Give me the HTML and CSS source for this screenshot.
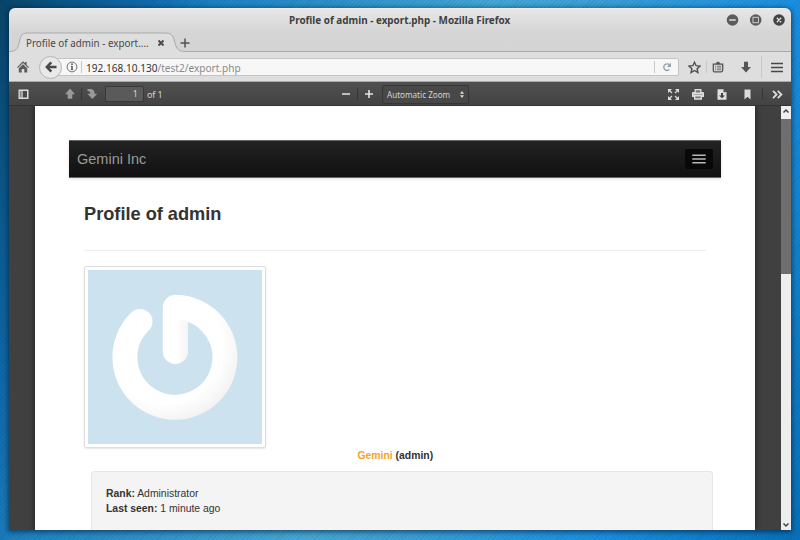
FILE: index.html
```html
<!DOCTYPE html>
<html lang="en">
<head>
<meta charset="utf-8">
<title>Profile of admin - export.php</title>
<link rel="stylesheet" href="styles.css">
</head>
<body>
<div class="window">
  <header class="chrome">
    <div class="titlebar">
      <span class="title"><span class="title-text">Profile of admin - export.php - Mozilla Firefox</span></span>
      <svg class="controls" width="60" height="14" viewBox="0 0 60 14">
        <g fill="#5c5c5c"><circle cx="6.5" cy="6" r="5.800"/><circle cx="29.7" cy="6" r="5.800"/><circle cx="53" cy="6" r="5.800" fill="#444"/></g>
        <g fill="none" stroke="#e0e0e0" stroke-width="1.300"><path d="M3.300 6h6.400M50.800 3.800l4.400 4.400M55.200 3.800l-4.400 4.400"/><rect x="27" y="3.300" width="5.400" height="5.400" stroke="#ccc" stroke-width="1"/></g>
      </svg>
    </div>
    <div class="tabs">
      <svg class="tab-shape" width="782" height="21" viewBox="0 0 782 21" preserveAspectRatio="none">
        <path d="M0 19.500C9 19.500 9 15 10.500 9C12 3 13 1 19 1H156C162 1 164 3 165.500 9C167 15 168 19.500 176 19.500H782V21H0Z" fill="#dedede"/>
        <path d="M0 19.500C9 19.500 9 15 10.500 9C12 3 13 1 19 1H156C162 1 164 3 165.500 9C167 15 168 19.500 176 19.500H782" fill="none" stroke="#a9a9a9"/>
      </svg>
      <span class="tab-text">Profile of admin - export....</span>
      <svg class="tab-close" width="8" height="8" viewBox="0 0 8 8"><path d="M1.500 1.500l5 5M6.500 1.500l-5 5" stroke="#4a4a4a" stroke-width="1.900"/></svg>
      <svg class="tab-add" width="10" height="10" viewBox="0 0 10 10"><path d="M5 .500v9M.500 5h9" stroke="#505050" stroke-width="1.500"/></svg>
    </div>
    <nav class="nav">
      <svg class="home" width="12" height="12" viewBox="0 0 12 12" fill="#5c5c5c"><path d="M6 .300L8 2.300V1h1.600v2.900L12 6.300l-.8.800L6 2.100.800 7.100 0 6.300Z"/><path d="M1.800 7.200L6 3.300l4.200 3.900V11.500H7.300V8H4.700v3.500H1.800Z"/></svg>
      <span class="back"><svg width="12" height="12" viewBox="0 0 12 12"><path d="M6.300 1.300L1.800 6l4.500 4.700M2 6h9.500" fill="none" stroke="#4a4a4a" stroke-width="2.500"/></svg></span>
      <div class="urlbar">
        <svg class="info" width="12" height="12" viewBox="0 0 12 12"><circle cx="6" cy="6" r="4.900" fill="none" stroke="#707070"/><path d="M6 5v4" fill="none" stroke="#555" stroke-width="1.500"/><path d="M5 5.300h1M4.800 8.700h2.400" stroke="#555" stroke-width=".800"/><circle cx="6" cy="3.200" r=".900" fill="#555"/></svg>
        <span class="bar"></span>
        <span class="url"><span class="address"><b>192.168.10.130</b>/test2/export.php</span></span>
        <span class="bar reload-bar"></span>
        <svg class="reload" width="10" height="10" viewBox="0 0 10 10"><path d="M7.400 7.500A3.300 3.300 0 1 1 7.500 2.900" fill="none" stroke="#93a3ae" stroke-width="1.400"/><path d="M9 .700V5H4.800Z" fill="#93a3ae"/></svg>
      </div>
      <svg class="star" width="13" height="13" viewBox="0 0 13 13"><path d="M6.500 1.200l1.600 3.500 3.900.4-2.900 2.600.8 3.800-3.400-2-3.400 2 .8-3.800L1 5.100l3.900-.4Z" fill="none" stroke="#505050" stroke-width="1.400"/></svg>
      <span class="bar thin"></span>
      <svg class="clip" width="12" height="12" viewBox="0 0 12 12"><path d="M1.300 3.200h9.400v6.100q0 1.500-1.500 1.500H2.800Q1.300 10.800 1.300 9.300Z" fill="none" stroke="#555" stroke-width="1.300"/><path d="M3.500 3L4.500 1.500 6 .500 7.500 1.500 8.500 3Z" fill="#555"/><path d="M3 5.200h1.200M5 5.200h4.300M3 7h1.200M5 7h4.300M3 8.800h1.200M5 8.800h4.300" stroke="#666" stroke-width=".900"/></svg>
      <svg class="dl" width="12" height="12" viewBox="0 0 12 12"><path d="M4 .800h4v5.200h3L6 11.400 1 6h3Z" fill="#555"/></svg>
      <span class="bar tall"></span>
      <svg class="menu" width="12" height="11" viewBox="0 0 12 11"><path d="M0 1.500h12M0 5.500h12M0 9.500h12" stroke="#484848" stroke-width="1.700"/></svg>
    </nav>
  </header>
  <div class="pdfbar">
    <svg class="side" width="11" height="11" viewBox="0 0 11 11"><path fill-rule="evenodd" d="M.500.500h10v9.500H.500ZM5 2v6.500h4V2Z" fill="#dedede"/><path d="M2.300 2v6.500M4 2v6.500" stroke="#555" stroke-width=".8"/></svg>
    <svg class="up" width="12" height="12" viewBox="0 0 12 12"><path d="M6 .500L11 6.200H8.300V10.800H3.700V6.200H1Z" fill="#999"/></svg>
    <span class="sep"></span>
    <svg class="down" width="12" height="12" viewBox="0 0 12 12"><path d="M1.500 1H5Q8.500 1.300 8.500 5.800h2.700L6.300 11 1.400 5.800H4.300Q4.300 3 1.500 3Z" fill="#999"/></svg>
    <span class="pageno">1</span>
    <span class="of">of 1</span>
    <svg class="minus" width="8" height="8" viewBox="0 0 8 8"><path d="M0 4h8" stroke="#e4e4e4" stroke-width="1.600"/></svg>
    <span class="sep zoomsep"></span>
    <svg class="plus" width="8" height="8" viewBox="0 0 8 8"><path d="M0 4h8M4 0v8" stroke="#e4e4e4" stroke-width="1.600"/></svg>
    <span class="select"><span class="zoom">Automatic Zoom</span><svg width="4" height="7" viewBox="0 0 4 7"><path d="M2 0l2 2.700H0ZM2 7L0 4.300h4Z" fill="#ddd"/></svg></span>
    <svg class="full" width="11" height="11" viewBox="0 0 11 11" fill="#ddd" stroke="#ddd"><path stroke="none" d="M0 0h4L0 4ZM11 0v4L7 0ZM0 11V7l4 4ZM11 11H7l4-4Z"/><path d="M1 1l3 3M10 1L7 4M1 10l3-3M10 10L7 7" stroke-width="1.200"/></svg>
    <svg class="print" width="12" height="11" viewBox="0 0 12 11"><path d="M2.500 0h7v3H11q1 0 1 1.200V8H10v2.700H2V8H0V4.200Q0 3 1 3h1.500Z" fill="#ddd"/><path d="M3.800 1.200h4.400V3.600H3.800ZM3.300 7.500h5.400v1.800H3.300Z" fill="#777"/><path d="M1.500 5.500h9" stroke="#999" stroke-width=".800"/></svg>
    <svg class="save" width="10" height="11" viewBox="0 0 10 11"><path d="M.500.300h6l3 3v7.400h-9Z" fill="#e0e0e0"/><path d="M4 4h2v2.500h2L5 9.300 2 6.500h2ZM6.500.300v3h3Z" fill="#444"/></svg>
    <svg class="mark" width="7" height="11" viewBox="0 0 7 11"><path d="M.500.500h6v10L3.500 7.700.500 10.500Z" fill="#dcdcdc"/></svg>
    <span class="sep marksep"></span>
    <svg class="more" width="11" height="9" viewBox="0 0 11 9"><path d="M1 .900L4.600 4.500 1 8.100M5.800.900l3.600 3.600-3.600 3.600" fill="none" stroke="#ddd" stroke-width="1.800"/></svg>
  </div>
  <main class="viewer">
    <div class="page">
      <div class="brandbar"><span>Gemini Inc</span><i class="burger"><svg width="14" height="10" viewBox="0 0 14 10"><path d="M.300 1.200h13.400M.300 5h13.400M.300 8.800h13.400" stroke="#b8b8b8" stroke-width="1.500"/></svg></i></div>
      <h1>Profile of admin</h1>
      <div class="avatar">
        <svg width="174" height="174" viewBox="0 0 174 174">
          <defs>
            <radialGradient id="ring" gradientUnits="userSpaceOnUse" cx="76" cy="75" r="78"><stop offset="0" stop-color="#fff"/><stop offset=".75" stop-color="#fff"/><stop offset="1" stop-color="#f3f3f3"/></radialGradient>
            <linearGradient id="stem" x1="0" y1="0" x2="1" y2="0"><stop offset=".5" stop-color="#f7f7f7" stop-opacity="0"/><stop offset="1" stop-color="#f4f4f4"/></linearGradient>
            <linearGradient id="fade" x1="0" y1="0" x2="0" y2="1"><stop offset="0" stop-color="#fff"/><stop offset=".4" stop-color="#fff" stop-opacity="0"/></linearGradient>
          </defs>
          <path d="M52 51.500A50 50 0 1 0 87.300 37.300V81.500" fill="none" stroke="url(#ring)" stroke-width="25" stroke-linecap="round" stroke-linejoin="round"/>
          <path d="M75 50H99.800V81.500A12.400 12.400 0 0 1 75 81.500Z" fill="url(#stem)"/>
          <path d="M75 44H99.800V70H75Z" fill="url(#fade)"/>
        </svg>
      </div>
      <p class="name"><b>Gemini</b> (admin)</p>
      <div class="well"><div><b>Rank:</b> Administrator</div><div><b>Last seen:</b> 1 minute ago</div></div>
    </div>
    <div class="scrollbar">
      <svg width="10" height="13" viewBox="0 0 10 13"><path d="M2.500 6.500L5 4l2.500 2.500" fill="none" stroke="#444" stroke-width="1.500"/></svg>
      <span class="thumb"></span>
      <svg class="scroll-down" width="10" height="13" viewBox="0 0 10 13"><path d="M2.500 6.500L5 9l2.500-2.500" fill="none" stroke="#444" stroke-width="1.500"/></svg>
    </div>
  </main>
</div>
</body>
</html>
```
FILE: styles.css
```css
* { box-sizing: border-box; }
body {
  margin: 0; width: 800px; height: 540px; padding: 8px 9px 10px; overflow: hidden;
  font-family: "Noto Sans", sans-serif;
  background:
    repeating-linear-gradient(135deg, rgba(0,40,80,.08) 0 1px, transparent 1px 3px),
    linear-gradient(110deg, #084468 0, #0f68a8 14%, #1e82c2 22%, #46a6d4 50%, #3fa0d4 58%, #1a8fdf 80%, #0870b8 100%);
}
svg { display: block; flex: none; }
.window { width: 782px; height: 522px; border-radius: 6px 6px 0 0; overflow: hidden; box-shadow: 0 1px 5px 1px rgba(0,20,40,.6); display: flex; flex-direction: column; }
.chrome { height: 74px; background: linear-gradient(#e7e7e7, #d5d5d5 24px, #d4d4d4 44px); border-top: 1px solid #eee; border-bottom: 1px solid #aaa; }
.titlebar { height: 23px; display: flex; align-items: center; }
.title { flex: 1; padding: 0 0 3px 279.500px; font-weight: bold; font-size: 11px; color: #404040; white-space: nowrap; }
.title-text { display: inline-block; transform: scaleX(.9); transform-origin: 0 50%; }
.controls { margin-right: 5px; }
.tabs { height: 21px; display: grid; grid-template-columns: 17px 131px 23px 1fr; align-items: center; }
.tab-shape { grid-area: 1 / 1 / 2 / 5; }
.tab-text { grid-area: 1 / 2; width: 140px; font-size: 11px; color: #484848; white-space: nowrap; transform: scaleX(.895); transform-origin: 0 50%; }
.tab-close { grid-area: 1 / 3; }
.tab-add { grid-area: 1 / 4; }
.nav { height: 28px; background: #dedede; display: flex; align-items: center; }
.home { margin-left: 8px; }
.back { z-index: 1; flex: none; width: 23px; height: 23px; margin-left: 10px; border: 1px solid #b4b4b4; border-radius: 50%; background: #e9e9e9; display: grid; place-items: center; }
.urlbar { width: 622px; height: 18px; margin-left: -5px; padding-left: 8px; background: #f7f7f7; border: 1px solid #c4c4c4; border-radius: 2px; display: flex; align-items: center; }
.bar { flex: none; width: 1px; height: 12px; margin-left: 3px; background: #c8c8c8; }
.url { width: 572px; padding-left: 4px; font-size: 11.500px; color: #8a8a8a; white-space: nowrap; }
.address { display: inline-block; transform: scaleX(.875); transform-origin: 0 50%; }
.url b { font-weight: 400; color: #333; }
.reload-bar { margin-left: 0; }
.reload { margin-left: 7px; }
.star { margin-left: 9px; }
.thin { margin-left: 5px; }
.clip { margin-left: 5px; }
.dl { margin-left: 16px; }
.tall { height: 22px; margin-left: 9px; }
.menu { margin-left: 9px; }
.pdfbar { height: 24px; padding-top: 1px; background: linear-gradient(#505050, #434343); border-bottom: 1px solid #333; display: flex; align-items: center; color: #d4d4d4; }
.side { margin-left: 9px; }
.up { margin-left: 35px; }
.sep { flex: none; width: 1px; height: 12px; margin-left: 5px; background: #383838; }
.down { margin-left: 4px; }
.pageno { flex: none; width: 39px; height: 16px; margin-left: 7px; padding-right: 5px; border: 1px solid #383838; border-radius: 2px; background: #5a5a5a; text-align: right; font-size: 9px; line-height: 14px; }
.of { flex: none; width: 16px; margin-left: 3px; font-size: 9px; white-space: nowrap; letter-spacing: -.1px; }
.minus { margin-left: 179px; }
.zoomsep { margin-left: 7px; }
.plus { margin-left: 7px; }
.select { flex: none; width: 87px; height: 19px; margin-left: 9px; padding: 0 4px; border: 1px solid #363636; border-radius: 2px; display: flex; align-items: center; justify-content: space-between; background: #484848; }
.zoom { width: 64px; font-size: 9px; white-space: nowrap; transform: scaleX(.9); transform-origin: 0 50%; }
.full { margin-left: 199px; }
.print { margin-left: 13px; }
.save { margin-left: 13px; }
.mark { margin-left: 17px; }
.marksep { margin-left: 11px; }
.more { margin-left: 9px; }
.viewer { flex: 1; display: flex; background: #404040; overflow: hidden; font-family: "Liberation Sans", sans-serif; }
.page { width: 720px; height: 424px; margin-left: 26px; padding: 34px 34px 0; background: #fff; box-shadow: 0 0 5px 1px #262626; color: #333; }
.brandbar { width: 652px; height: 38px; padding: 0 8px; display: flex; align-items: center; justify-content: space-between; background: linear-gradient(#222, #111); border: 1px solid #666; border-width: 1px 0; font-size: 14.500px; color: #999; box-shadow: 0 1px 3px rgba(0,0,0,.12); }
.burger { width: 28px; height: 20px; border-radius: 2px; background: #080808; display: grid; place-items: center; }
h1 { width: 622px; height: 73px; margin: 0 0 15px 15px; padding-top: 24px; border-bottom: 1px solid #eee; font-size: 18.200px; line-height: 24px; }
.avatar { width: 182px; height: 182px; margin-left: 15px; padding: 3px; border: 1px solid #ddd; border-radius: 2px; box-shadow: 0 1px 2px rgba(0,0,0,.1); }
.avatar svg { background: #cde2ef; }
.name { margin: 1px 0 0 288.500px; height: 14px; font: bold 10.400px/14px "Liberation Sans", sans-serif; }
.name b { color: #f5a22d; }
.well { width: 622px; height: 74px; margin: 8px 0 0 22px; padding: 14px; border: 1px solid #e7e7e7; border-radius: 3px; background: #f4f4f4; font-size: 10.400px; line-height: 15px; }
.scrollbar { width: 10px; margin-left: 26px; background: #eee; display: flex; flex-direction: column; }
.thumb { height: 155px; background: #6e6e6e; }
.scroll-down { margin-top: auto; }
```
